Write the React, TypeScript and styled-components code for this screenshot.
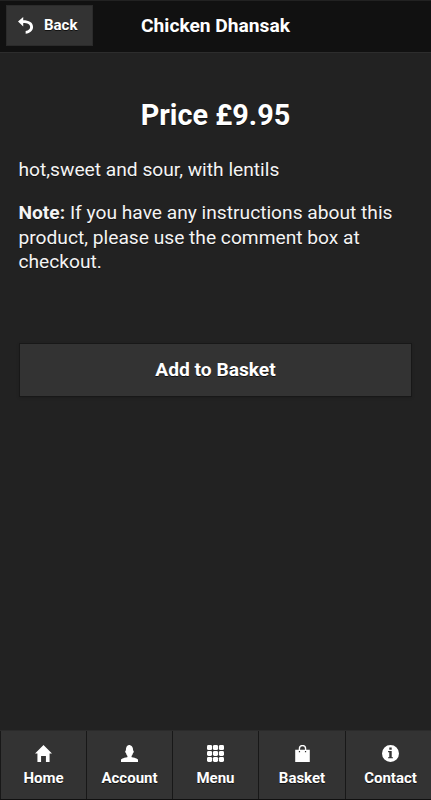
import React from 'react';
import styled, { createGlobalStyle } from 'styled-components';

const GlobalStyle = createGlobalStyle`
  * { box-sizing: border-box; }
  html, body { margin: 0; background: #222; }
  body { overflow: hidden; }
`;

const Page = styled.div`
  display: flex;
  flex-direction: column;
  height: 800px;
  background: #222;
  color: #fff;
  font-family: Roboto, sans-serif;
  text-shadow: 0 1px 0 #111;
`;

const Header = styled.header`
  display: grid;
  grid-template-columns: 134px 1fr 134px;
  align-items: start;
  height: 53px;
  padding-top: 4px;
  background: #111;
  border-top: 1px solid #222;
  border-bottom: 1px solid #2d2d2d;
`;

const BackButton = styled.button`
  display: flex;
  align-items: center;
  gap: 9px;
  width: 87px;
  height: 41px;
  margin-left: 6px;
  padding: 0 0 2px 11px;
  border: 1px solid #2b2b2b;
  background: #333;
  color: #fff;
  font: 700 15px/20px Roboto, sans-serif;
  text-shadow: 0 1px 0 #111;
`;

const Title = styled.h1`
  margin: 8px 0 0;
  font-size: 19.2px;
  line-height: 25px;
  text-align: center;
  white-space: nowrap;
`;

const Content = styled.main`
  flex: 1;
  padding: 0 18.5px;
`;

const Price = styled.h2`
  margin: 43.5px 0 0;
  font-size: 28.8px;
  line-height: 37px;
  text-align: center;
`;

const Paragraph = styled.p<{ $top: number }>`
  margin: ${({ $top }) => $top}px 0 0;
  color: #f4f4f4;
  font-size: 19.2px;
  line-height: 24.5px;
`;

const AddButton = styled.button`
  display: block;
  width: 393px;
  height: 54px;
  margin: 68.5px 0 0 0.5px;
  padding: 0;
  border: 1px solid #181818;
  background: #333;
  box-shadow: 0 1px 3px rgba(0, 0, 0, 0.15);
  color: #fff;
  font: 700 19.2px/24px Roboto, sans-serif;
  text-shadow: 0 1px 0 #111;
`;

const NavBar = styled.nav`
  display: grid;
  grid-template-columns: 86px 86px 86px 87px 1fr;
  height: 70px;
  border-top: 1px solid #2b2b2b;
  border-bottom: 1px solid #101010;
  background: #333;
`;

const NavItem = styled.a<{ $shift?: number }>`
  display: flex;
  flex-direction: column;
  align-items: center;
  padding: 14px 0 0 ${({ $shift = 0 }) => $shift}px;
  border-left: 1px solid #181818;
  font-size: 15px;
  font-weight: 700;
  line-height: 20px;
`;

const NavLabel = styled.span`
  margin-top: 6px;
`;

const Icon = styled.svg`
  display: block;
  flex: none;
  width: 17px;
  height: 17px;
  fill: #fff;
`;

const LowIcon = styled(Icon)`
  margin-top: 2px;
`;

const BackIcon = () => (
  <LowIcon viewBox="0 0 14 14">
    <path d="M4.3 0v2.6C9 2.6 12.4 4.4 12.4 8.2c0 3-2.4 5.1-6.1 5.5v-2.1c2.4-.4 3.7-1.6 3.7-3.3 0-2.2-2.1-3.3-5.7-3.3v2.8L0 3.8z" />
  </LowIcon>
);

const HomeIcon = () => (
  <Icon viewBox="0 0 14 14">
    <polygon points="7,0 0,7 2,7 2,14 5,14 5,9 9,9 9,14 12,14 12,7 14,7" />
  </Icon>
);

const UserIcon = () => (
  <Icon viewBox="0 0 14 14">
    <path d="M8.851,10.101c-0.18-0.399-0.2-0.763-0.153-1.104C9.383,8.49,9.738,7.621,9.891,6.465C10.493,6.355,10.5,5.967,10.5,5.5c0-0.437-0.008-0.804-0.502-0.94C9.999,4.539,10,4.521,10,4.5c0-2.103-1-4-2-4C8,0.5,7.5,0,6.5,0C5,0,4,1.877,4,4.5c0,0.021,0.001,0.039,0.002,0.06C3.508,4.696,3.5,5.063,3.5,5.5c0,0.467,0.007,0.855,0.609,0.965C4.262,7.621,4.617,8.49,5.303,8.997c0.047,0.341,0.026,0.704-0.153,1.104C1.503,10.503,0,12,0,12v2h14v-2C14,12,12.497,10.503,8.851,10.101z" />
  </Icon>
);

const GridIcon = () => (
  <Icon viewBox="0 0 14 14">
    {[0, 4.9, 9.8].map((y) =>
      [0, 4.9, 9.8].map((x) => (
        <rect key={`${x}-${y}`} x={x} y={y} width="4.2" height="4.2" rx="1.2" />
      )),
    )}
  </Icon>
);

const BagIcon = () => (
  <Icon viewBox="0 0 14 14">
    <path
      fillRule="evenodd"
      d="M1 4h2.9V3a3.1 3.1 0 0 1 6.2 0v1H13v10H1zM5 4h4V3a2 2 0 0 0-4 0zM4 5v1h1V5zM9 5v1h1V5z"
    />
  </Icon>
);

const InfoIcon = () => (
  <Icon viewBox="0 0 14 14">
    <path
      fillRule="evenodd"
      d="M7 0a7 7 0 1 0 0 14A7 7 0 0 0 7 0zM6 2h2v2H6zM5 5h3v5h1v1H5v-1h1V6H5z"
    />
  </Icon>
);

const navItems = [
  { label: 'Home', Glyph: HomeIcon },
  { label: 'Account', Glyph: UserIcon },
  { label: 'Menu', Glyph: GridIcon },
  { label: 'Basket', Glyph: BagIcon },
  { label: 'Contact', Glyph: InfoIcon, shift: 4 },
];

export default function App() {
  return (
    <Page>
      <GlobalStyle />
      <Header>
        <BackButton>
          <BackIcon />
          Back
        </BackButton>
        <Title>Chicken Dhansak</Title>
      </Header>
      <Content>
        <Price>Price £9.95</Price>
        <Paragraph $top={24}>hot,sweet and sour, with lentils</Paragraph>
        <Paragraph $top={19}>
          <strong>Note:</strong> If you have any instructions about this product, please use the
          comment box at checkout.
        </Paragraph>
        <AddButton>Add to Basket</AddButton>
      </Content>
      <NavBar>
        {navItems.map(({ label, Glyph, shift }) => (
          <NavItem key={label} $shift={shift}>
            <Glyph />
            <NavLabel>{label}</NavLabel>
          </NavItem>
        ))}
      </NavBar>
    </Page>
  );
}
